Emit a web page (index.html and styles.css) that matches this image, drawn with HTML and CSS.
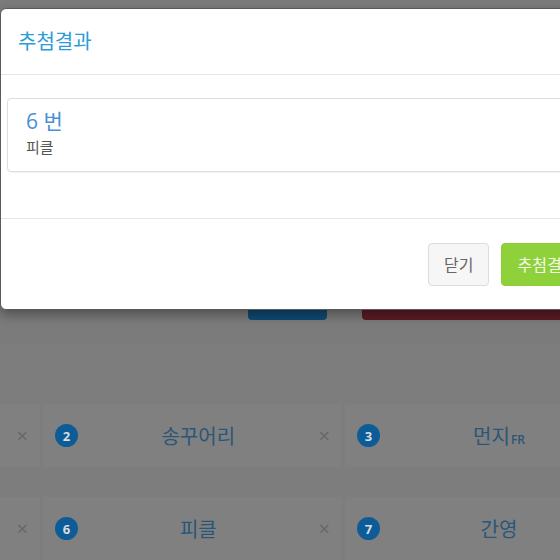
FILE: index.html
```html
<!DOCTYPE html>
<html lang="ko">
<head>
    <meta charset="UTF-8">
    <meta name="viewport" content="width=device-width, initial-scale=1.0">
    <title>추첨결과</title>
    <link rel="stylesheet" href="styles.css">
</head>
<body>
    <div class="page">
        <div class="actions">
            <span class="btn-blue"></span>
            <span class="btn-red"></span>
        </div>

        <div class="board">
            <div class="board-row">
                <div class="slot"><span class="remove">&times;</span></div>
                <div class="slot"><span class="badge">2</span><span class="name">송꾸어리</span><span class="remove">&times;</span></div>
                <div class="slot slot-edge"><span class="badge">3</span><span class="name">먼지<small>FR</small></span></div>
            </div>
            <div class="board-row">
                <div class="slot"><span class="remove">&times;</span></div>
                <div class="slot"><span class="badge">6</span><span class="name">피클</span><span class="remove">&times;</span></div>
                <div class="slot slot-edge"><span class="badge">7</span><span class="name">간영</span></div>
            </div>
        </div>
    </div>

    <div class="modal">
        <div class="modal-header">
            <h4 class="modal-title">추첨결과</h4>
        </div>
        <div class="modal-body">
            <div class="result-panel">
                <div class="result-number">6 번</div>
                <div class="result-name">피클</div>
            </div>
        </div>
        <div class="modal-footer">
            <button class="btn-close" type="button">닫기</button>
            <button class="btn-draw" type="button">추첨결과 저장</button>
        </div>
    </div>
</body>
</html>
```

FILE: styles.css
```css
body {
    margin: 0;
    background-color: #7b7b7b;
    font-family: 'Open Sans', 'Noto Sans CJK KR', sans-serif;
    overflow: hidden;
    height: 560px;
}

.page {
    width: 560px;
}

.actions {
    height: 320px;
    display: flex;
    align-items: flex-end;
    padding-left: 248px;
    gap: 35px;
    box-sizing: border-box;
}

.btn-blue {
    flex: 0 0 79px;
    height: 40px;
    background-color: #0f4a72;
    border-radius: 0 0 4px 4px;
}

.btn-red {
    flex: 0 0 260px;
    height: 40px;
    background-color: #5a1d24;
    border-radius: 0 0 4px 4px;
}

.board {
    margin-top: 25px;
    padding-top: 59px;
    background-color: #7d7d7d;
    display: flex;
    flex-direction: column;
    gap: 30px;
}

.board-row {
    display: flex;
    gap: 3px;
    margin-left: -259px;
}

.slot {
    flex: 0 0 299px;
    height: 63px;
    background-color: #808080;
    display: flex;
    align-items: center;
    padding: 0 12px;
    box-sizing: border-box;
}

.slot-edge {
    padding-right: 26px;
}

.badge {
    width: 23px;
    height: 23px;
    border-radius: 50%;
    background-color: #0d5c97;
    color: #d8dde2;
    font-size: 13px;
    font-weight: bold;
    display: flex;
    align-items: center;
    justify-content: center;
}

.name {
    flex: 1;
    text-align: center;
    font-size: 20px;
    color: #2a5677;
}

.name small {
    font-size: 12px;
    font-weight: 600;
    margin-left: 1px;
}

.remove {
    margin-left: auto;
    color: #676767;
    font-size: 20px;
    line-height: 1;
}

.modal {
    position: absolute;
    top: 8px;
    left: 0;
    width: 640px;
    background-color: #fff;
    border: 1px solid #5a5a5a;
    border-radius: 6px;
    box-shadow: 0 5px 12px rgba(0, 0, 0, 0.35);
}

.modal-header {
    height: 65px;
    padding: 0 17px;
    border-bottom: 1px solid #e5e5e5;
    display: flex;
    align-items: center;
}

.modal-title {
    margin: 0 0 2px;
    font-size: 20px;
    font-weight: normal;
    color: #2d9cd8;
}

.modal-body {
    padding: 23px 6px 46px;
}

.result-panel {
    border: 1px solid #dedede;
    border-radius: 4px;
    box-shadow: 0 1px 1px rgba(0, 0, 0, 0.05);
    padding: 7px 18px 12px;
    height: 74px;
    box-sizing: border-box;
}

.result-number {
    font-size: 21px;
    color: #4a8fd8;
    line-height: 30px;
}

.result-name {
    font-size: 15px;
    color: #555;
    line-height: 22px;
}

.modal-footer {
    height: 91px;
    border-top: 1px solid #e5e5e5;
    display: flex;
    align-items: center;
    padding-left: 427px;
    gap: 12px;
    box-sizing: border-box;
}

.btn-close,
.btn-draw {
    height: 43px;
    border-radius: 4px;
    font-family: inherit;
    font-size: 16px;
    padding: 0 15px;
    white-space: nowrap;
    flex-shrink: 0;
}

.btn-close {
    background-color: #f6f6f6;
    border: 1px solid #dcdcdc;
    color: #666;
}

.btn-draw {
    background-color: #8fd13a;
    border: 1px solid #8ccc36;
    color: #f4fbe8;
}
```
